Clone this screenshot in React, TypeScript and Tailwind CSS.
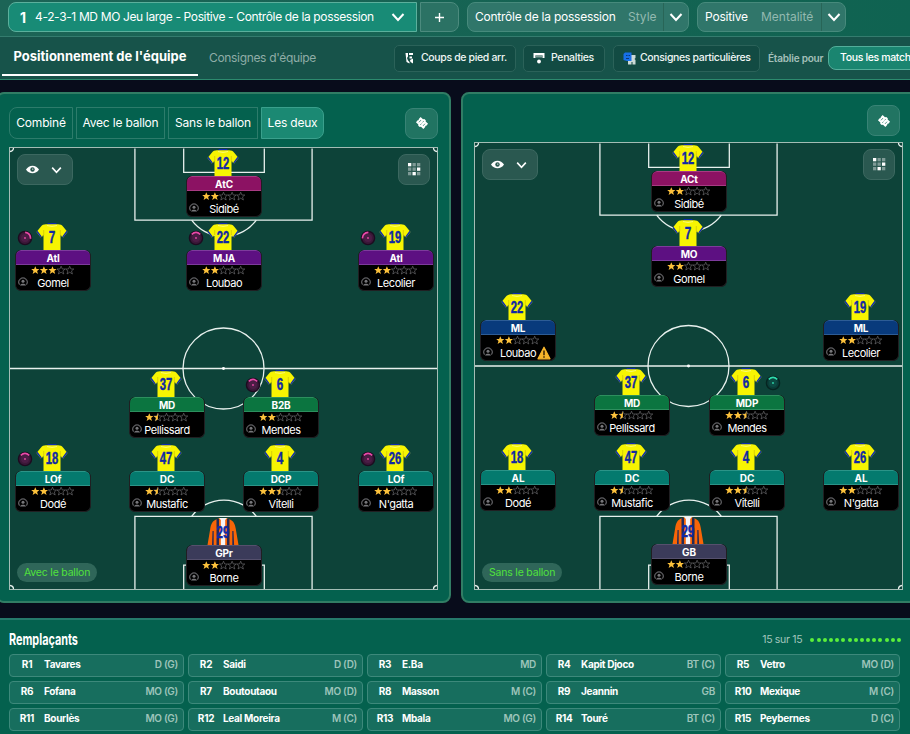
import type { ReactNode } from 'react'
import clsx from 'clsx'

type Tone = 'magenta' | 'purple' | 'blue' | 'green' | 'teal' | 'slate'

interface Player {
  x: number
  y: number
  role: string
  tone: Tone
  shirt: number
  name: string
  stars: number
  /** Rotation of the duty dial, in degrees. */
  dial?: number
  dialSide?: 'left' | 'right'
  warning?: boolean
}

const TONES: Record<Tone, string> = {
  magenta: 'bg-[#8c1263] border-[#a83b83]',
  purple: 'bg-[#5d1082] border-[#7d3b9c]',
  blue: 'bg-[#083a7c] border-[#2d5c96]',
  green: 'bg-[#0b7540] border-[#2d8f5e]',
  teal: 'bg-[#047a6e] border-[#2b9488]',
  slate: 'bg-[#3b3b5a] border-[#55506d]',
}

// x is the middle of the card, y its top edge, both from the pitch corner
const WITH_BALL: Player[] = [
  { x: 214, y: 28, role: 'AtC', tone: 'magenta', shirt: 12, name: 'Sidibé', stars: 2 },
  { x: 43, y: 102, role: 'AtI', tone: 'purple', shirt: 7, name: 'Gomel', stars: 3, dial: 50 },
  { x: 214, y: 102, role: 'MJA', tone: 'purple', shirt: 22, name: 'Loubao', stars: 2, dial: 0 },
  { x: 386, y: 102, role: 'AtI', tone: 'purple', shirt: 19, name: 'Lecolier', stars: 2, dial: -45 },
  { x: 157, y: 249, role: 'MD', tone: 'green', shirt: 37, name: 'Pellissard', stars: 1.5 },
  { x: 271, y: 249, role: 'B2B', tone: 'green', shirt: 6, name: 'Mendes', stars: 2, dial: 0 },
  { x: 43, y: 323, role: 'LOf', tone: 'teal', shirt: 18, name: 'Dodé', stars: 2, dial: 0 },
  { x: 157, y: 323, role: 'DC', tone: 'teal', shirt: 47, name: 'Mustafic', stars: 1.5 },
  { x: 271, y: 323, role: 'DCP', tone: 'teal', shirt: 4, name: 'Vitelli', stars: 2.5 },
  { x: 386, y: 323, role: 'LOf', tone: 'teal', shirt: 26, name: "N'gatta", stars: 2, dial: 0 },
  { x: 214, y: 397, role: 'GPr', tone: 'slate', shirt: 29, name: 'Borne', stars: 2 },
]

const WITHOUT_BALL: Player[] = [
  { x: 214, y: 28, role: 'ACt', tone: 'magenta', shirt: 12, name: 'Sidibé', stars: 2 },
  { x: 214, y: 103, role: 'MO', tone: 'purple', shirt: 7, name: 'Gomel', stars: 2 },
  { x: 43, y: 177, role: 'ML', tone: 'blue', shirt: 22, name: 'Loubao', stars: 2, warning: true },
  { x: 386, y: 177, role: 'ML', tone: 'blue', shirt: 19, name: 'Lecolier', stars: 2 },
  { x: 157, y: 252, role: 'MD', tone: 'green', shirt: 37, name: 'Pellissard', stars: 1.5 },
  { x: 272, y: 252, role: 'MDP', tone: 'green', shirt: 6, name: 'Mendes', stars: 2.5, dial: 0, dialSide: 'right' },
  { x: 43, y: 327, role: 'AL', tone: 'teal', shirt: 18, name: 'Dodé', stars: 2 },
  { x: 157, y: 327, role: 'DC', tone: 'teal', shirt: 47, name: 'Mustafic', stars: 1.5 },
  { x: 272, y: 327, role: 'DC', tone: 'teal', shirt: 4, name: 'Vitelli', stars: 2.5 },
  { x: 386, y: 327, role: 'AL', tone: 'teal', shirt: 26, name: "N'gatta", stars: 2 },
  { x: 214, y: 401, role: 'GB', tone: 'slate', shirt: 29, name: 'Borne', stars: 2 },
]

const SUBS = [
  ['R1', 'Tavares', 'D (G)'],
  ['R2', 'Saidi', 'D (D)'],
  ['R3', 'E.Ba', 'MD'],
  ['R4', 'Kapit Djoco', 'BT (C)'],
  ['R5', 'Vetro', 'MO (D)'],
  ['R6', 'Fofana', 'MO (G)'],
  ['R7', 'Boutoutaou', 'MO (D)'],
  ['R8', 'Masson', 'M (C)'],
  ['R9', 'Jeannin', 'GB'],
  ['R10', 'Mexique', 'M (C)'],
  ['R11', 'Bourlès', 'MO (G)'],
  ['R12', 'Leal Moreira', 'M (C)'],
  ['R13', 'Mbala', 'MO (G)'],
  ['R14', 'Touré', 'BT (C)'],
  ['R15', 'Peybernes', 'D (C)'],
]

function Chevron({ className }: { className?: string }) {
  return (
    <svg className={clsx('shrink-0', className)} viewBox="0 0 14 10" fill="none" stroke="currentColor" strokeWidth="2">
      <path d="m1.5 2 5.5 6 5.5-6" />
    </svg>
  )
}

function Shirt({ number }: { number: number }) {
  const keeper = number === 29
  return (
    <svg className="h-[27px] w-8" viewBox="0 0 32 27">
      {keeper ? (
        <>
          <path d="M9 1.5 13 0h6l4 1.5c3.5 1.5 5 4.5 5.8 9.5l2.7 16H.5l2.7-16C4 6 5.5 3 9 1.5Z" fill="#f86507" />
          <path d="M9.5 1H12v26H9.500zM20 1h2.500v26H20zM5.500 13h1.200v14H5zM25.300 13h1.200l.6 14h-1.800z" fill="#252a55" />
          <path d="M12 0h8l-1.800 2v25h-4.400V2z" fill="#f4f4f8" />
        </>
      ) : (
        <>
          <path d="M12 0h8l1.500 2h-11z" fill="#0c2bb0" />
          <path d="M10 1.300h12c2.400.2 4 .7 5 2.200l4.500 5.500-4.300 5.500-2.700-2.500v15h-17V12l-2.700 2.500L.5 9 5 3.500c1-1.500 2.600-2 5-2.200Z" fill="#f7f402" />
          <path d="m.5 9 1-1.200 4.200 5.700-.9 1zM31.500 9l-1-1.200-4.200 5.700.9 1z" fill="#0c2bb0" />
          <path d="M7.700 7v5l-1.500 1.400M24.300 7v5l1.500 1.400" stroke="#cdbf0a" strokeWidth=".7" fill="none" />
          <path d="M11 2.500q5 2 10 0" stroke="#fbfa8a" strokeWidth=".8" fill="none" />
        </>
      )}
      <text
        x="16"
        y="20"
        textAnchor="middle"
        textLength={number > 9 ? 12.5 : 6.5}
        lengthAdjust="spacingAndGlyphs"
        fontSize="16"
        fontWeight="700"
        fill="#1029a4"
        stroke="#1029a4"
        strokeWidth=".45"
        className="font-['Liberation_Sans',sans-serif]"
      >
        {number}
      </text>
    </svg>
  )
}

const STAR = 'M4.300.2 5.500 3h2.900L6.100 4.900l.9 3.100L4.300 6.200 1.600 8l.9-3.100L.2 3h2.900z'

function Stars({ value }: { value: number }) {
  return (
    <svg className="h-[9px] w-[43px]" viewBox="0 0 43 9">
      {[0, 1, 2, 3, 4].map((i) => (
        <g key={i} transform={`translate(${i * 8.6} 0)`}>
          {value >= i + 1 ? (
            <path d={STAR} fill="#fcc13b" />
          ) : (
            <path d={STAR} fill="none" stroke="#77777a" strokeWidth=".6" />
          )}
          {value === i + 0.5 && <path d="M4.300.2v6L1.600 8l.9-3.100L.2 3h2.900z" fill="#fcc13b" />}
        </g>
      ))}
    </svg>
  )
}

function Dial({ angle, green }: { angle: number; green?: boolean }) {
  return (
    <svg className="h-4 w-4" viewBox="0 0 16 16">
      <circle cx="8" cy="8" r="6.600" fill={green ? '#0a3d38' : '#3b1738'} stroke={green ? '#062521' : '#1c0c20'} strokeWidth="1.400" />
      <circle cx="8" cy="8" r="4" fill={green ? '#0c4b43' : '#4b1d45'} />
      <path
        d="M3.800 4.300Q8 .6 12.200 4.300"
        fill="none"
        stroke={green ? '#2fdcae' : '#e84aa8'}
        strokeWidth="1.700"
        transform={`rotate(${angle} 8 8)`}
      />
      <circle cx="8" cy="8" r=".9" fill={green ? '#2fdcae' : '#e84aa8'} />
    </svg>
  )
}

function PlayerCard({ player: p }: { player: Player }) {
  return (
    <div className="absolute w-[76px]" style={{ left: p.x - 38, top: p.y - 27 }}>
      <div className="flex h-[27px] justify-center pr-[2px]">
        <Shirt number={p.shirt} />
      </div>
      <div className="h-[41px] overflow-hidden rounded-[6px] border border-t-0 border-[#201f22] bg-black text-center text-white">
        <div className={clsx('-mx-px h-[15px] rounded-t-[6px] border text-[10px] leading-[14px] font-bold tracking-[-0.15px]', TONES[p.tone])}>
          {p.role}
        </div>
        <div className="flex h-[11px] items-center justify-center pr-px">
          <Stars value={p.stars} />
        </div>
        <div className="text-[11px] leading-[14px] tracking-[-0.45px]">{p.name}</div>
      </div>
      <svg className="absolute bottom-[4px] left-[3px] h-[10px] w-[10px]" viewBox="0 0 10 10" fill="none">
        <path d="M1.600 7.700A4.200 4.200 0 1 1 8.400 7.700" stroke="#5f5f62" strokeWidth="1.200" />
        <circle cx="5" cy="4.300" r="1.500" fill="#77777a" />
        <path d="M2 8.600C2.400 6 7.600 6 8 8.600z" fill="#77777a" />
      </svg>
      {p.dial !== undefined && (
        <div className={clsx('absolute top-[7px]', p.dialSide === 'right' ? 'left-[56px]' : 'left-[2px]')}>
          <Dial angle={p.dial} green={p.dialSide === 'right'} />
        </div>
      )}
      {p.warning && (
        <svg className="absolute right-[5px] bottom-[1px] h-[14px] w-[14px]" viewBox="0 0 14 14">
          <path d="M7 1.200 13 12.800H1z" fill="#f8b62b" stroke="#f8b62b" strokeWidth="1.200" strokeLinejoin="round" />
          <path d="M7 4.500v4.700M7 10.200v1.600" stroke="#3a2504" strokeWidth="1.500" />
        </svg>
      )}
    </div>
  )
}

function Markings({ height: h }: { height: number }) {
  const mid = h / 2
  return (
    <svg className="absolute inset-0 h-full w-full" viewBox={`0 0 429 ${h}`} fill="none" stroke="#e8f1ee" strokeWidth="1.300">
      <path d={`M125.500.5V72.500h178V.5M174.500.5V24.500h81V.5`} />
      <path d={`M125.500 ${h}V${h - 73}h178V${h}M174.500 ${h}V${h - 24}h81V${h}`} />
      <path d={`M182.500 72.500a40.500 40.500 0 0 0 65 0M182.500 ${h - 73}a40.500 40.500 0 0 1 65 0`} />
      <path d={`M0 ${mid}H429`} strokeWidth="1.700" />
      <circle cx="214.500" cy={mid} r="40.700" />
      <circle cx="214.500" cy={mid} r="1.500" fill="#fff" stroke="none" />
      <path d={`M0 3.500Q3.500 3 3.500 0M429 3.500Q425.500 3 425.500 0M0 ${h - 3.5}Q3.500 ${h - 3} 3.500 ${h}M429 ${h - 3.5}Q425.500 ${h - 3} 425.500 ${h}`} />
    </svg>
  )
}

function Pitch({ players, label, height }: { players: Player[]; label: string; height: number }) {
  return (
    <div className="relative w-[429px] border border-[#a3bdb5] bg-[#0d4339]" style={{ height }}>
      <Markings height={height} />
      <div className="absolute top-[6px] right-[7px] left-[7px] flex justify-between">
        <div className="flex h-[31px] w-14 items-center justify-center gap-[12px] rounded-lg border border-[#3c6860] bg-[#2a5850] pr-[3px] text-white">
          <svg className="h-[9px] w-[13px]" viewBox="0 0 13 9">
            <path d="M0 4.500C3-.6 10-.6 13 4.500 10 9.600 3 9.600 0 4.500Z" fill="#fff" />
            <circle cx="6.500" cy="4.500" r="2.200" fill="#2a5850" />
            <circle cx="6.800" cy="4.100" r=".7" fill="#fff" />
          </svg>
          <Chevron className="h-[8px] w-[11px]" />
        </div>
        <div className="flex h-[31px] w-8 items-center justify-center rounded-lg border border-[#3c6860] bg-[#2a5850]">
          <svg className="h-[13px] w-[13px]" viewBox="0 0 13 13" fill="#fff">
            {[0, 1, 2].map((r) =>
              [0, 1, 2].map((c) => (
                <rect
                  key={`${r}${c}`}
                  x={c * 4.5}
                  y={r * 4.5}
                  width="3.300"
                  height="3.300"
                  opacity={['00', '12', '21'].includes(`${r}${c}`) ? 1 : 0.4}
                />
              )),
            )}
          </svg>
        </div>
      </div>
      {players.map((p) => (
        <PlayerCard key={p.shirt} player={p} />
      ))}
      <div className="absolute bottom-[7px] left-[7px] flex h-[19px] items-center rounded-full bg-[#2f6659] px-[7px] text-[10.5px] tracking-[-0.2px] text-[#51e23c]">
        {label}
      </div>
    </div>
  )
}

function PinButton() {
  return (
    <div className="flex h-[31px] w-[33px] items-center justify-center rounded-lg border border-[#388375] bg-[#217462]">
      <svg className="h-[14px] w-[14px]" viewBox="0 0 14 14">
        <g transform="rotate(42 7 7)">
          <path d="M2 3.500h3.200L6 2.500h2l.8 1H12v3l-.8.5.8.5v3H8.800l-.8 1H6l-.8-1H2v-3l.8-.5-.8-.5z" fill="#fff" />
          <path d="M4.300 5.500v3M9.700 5.500v3M7 4.500v1.700M7 7.800v1.700" stroke="#217462" strokeWidth=".7" />
        </g>
      </svg>
    </div>
  )
}

function ToolButton({ icon, className, children }: { icon: ReactNode; className: string; children: ReactNode }) {
  return (
    <div className={clsx('flex h-[27px] shrink-0 items-center rounded-[5px] border border-[#2b6259] bg-[#124b43] pl-[9px] text-[10.5px] font-medium tracking-[-0.35px] whitespace-nowrap text-[#eef5f3]', className)}>
      {icon}
      {children}
    </div>
  )
}

function Header() {
  return (
    <header className="h-20 border-b border-[#2d8a6e] bg-[#17534a] text-white">
      <div className="flex h-[37px] items-start border-b border-[#347c6e] bg-gradient-to-r from-[#1c6456] to-[#0f6351] pt-[2px] pl-2 text-[12px] whitespace-nowrap">
        <div className="flex h-[30px] w-[409px] items-center rounded-l-lg border border-[#5bb09c] bg-[#188b76] pl-[11px]">
          <span className="w-[15px] shrink-0 text-[14px] font-bold">1</span>
          <span className="tracking-[-0.36px]">4-2-3-1 MD MO Jeu large - Positive - Contrôle de la possession</span>
          <Chevron className="mr-[11px] ml-auto h-[10px] w-[14px]" />
        </div>
        <div className="ml-[3px] flex h-[30px] w-[39px] items-center justify-center rounded-r-lg border border-[#4c8b7e] bg-[#2b7264]">
          <svg className="h-[9px] w-[9px]" viewBox="0 0 9 9" stroke="#fff" strokeWidth="1.400">
            <path d="M4.500 0v9M0 4.500h9" />
          </svg>
        </div>
        <div className="ml-2 flex h-[30px] w-[222px] items-center rounded-lg border border-[#478a7c] bg-[#30766a] pl-[7px]">
          <span className="w-[153px] shrink-0 tracking-[-0.24px]">Contrôle de la possession</span>
          <span className="text-[#93b9b0]">Style</span>
          <span className="ml-auto flex h-full w-[25px] items-center justify-center border-l border-[#286557]">
            <Chevron className="h-[10px] w-[14px]" />
          </span>
        </div>
        <div className="ml-2 flex h-[30px] w-[149px] items-center rounded-lg border border-[#478a7c] bg-[#30766a] pl-[7px]">
          <span className="w-[56px] shrink-0 tracking-[-0.2px]">Positive</span>
          <span className="text-[#93b9b0]">Mentalité</span>
          <span className="ml-auto flex h-full w-[24px] items-center justify-center border-l border-[#286557]">
            <Chevron className="h-[10px] w-[14px]" />
          </span>
        </div>
      </div>
      <div className="flex h-[42px] items-center overflow-hidden pl-[2px] whitespace-nowrap">
        <div className="flex h-[39px] w-[196px] shrink-0 items-center justify-center self-start border-b-2 border-white pt-[2px] text-[13px] font-bold">
          Positionnement de l'équipe
        </div>
        <div className="w-[196px] shrink-0 pl-[11px] text-[12px] tracking-[-0.33px] text-[#8fada7]">Consignes d'équipe</div>
        <ToolButton
          className="w-[122px]"
          icon={
            <svg className="mr-[6px] h-3 w-[11px] shrink-0" viewBox="0 0 11 12" fill="#fff">
              <path d="M1.500 1H4v3.500L3 6l1 2.500L5.500 10v1.500L2.500 10zM5 1h4v2H5zM5.500 4.500h2.500v2H5.500zM6 8l3-1.500v5L6.500 10z" />
            </svg>
          }
        >
          Coups de pied arr.
        </ToolButton>
        <ToolButton
          className="ml-[7px] w-[82px]"
          icon={
            <svg className="mr-[6px] h-3 w-3 shrink-0" viewBox="0 0 12 12">
              <path d="M.5 6V1h11v5h-2V3.500h-7V6z" fill="#fff" />
              <path d="M2.500 3.200h7V5.500h-7z" fill="#7f9e98" />
              <circle cx="6" cy="9.500" r="1.900" fill="#fff" />
            </svg>
          }
        >
          Penalties
        </ToolButton>
        <ToolButton
          className="ml-2 w-[147px]"
          icon={
            <svg className="mr-[4px] h-[13px] w-[13px] shrink-0" viewBox="0 0 13 13">
              <path d="M8 3h4.500v3l-1 1 1 1v4.500h-3V10h-1v2.500H5V9h3z" fill="#cbdad7" />
              <path d="M.5 2 2 .5h6.500V9H4L.5 8z" fill="#1770e8" />
              <path d="M3 3.500h1.500M5.500 3.500H7M3 6.500h3" stroke="#0b3976" />
            </svg>
          }
        >
          Consignes particulières
        </ToolButton>
        <span className="ml-[8px] w-[60px] shrink-0 text-[10px] font-semibold tracking-[-0.2px] text-[#a4c0ba]">Établie pour</span>
        <div className="flex h-6 w-[110px] shrink-0 items-center rounded-lg border border-[#53ae9a] bg-[#1a8570] pl-[11px] text-[10.5px] font-medium tracking-[-0.35px]">
          Tous les match
        </div>
      </div>
    </header>
  )
}

const TAB = 'flex h-8 items-center justify-center border text-[12px] tracking-[-0.2px] whitespace-nowrap text-white'

export default function App() {
  return (
    <div className="h-[734px] w-[910px] overflow-hidden bg-[#080c1b] font-['Inter',sans-serif]">
      <Header />

      <div className="mt-[12px] flex h-[511px] gap-[10px]">
        <section className="-ml-1 w-[455px] shrink-0 rounded-lg border-2 border-[#317d64] bg-[#04614e] pl-[11px]">
          <div className="flex h-[53px] items-center gap-[3px] pt-[5px] pr-[11px]">
            <div className={clsx(TAB, 'w-[64px] rounded-l-lg border-[#2d7c6b]')}>Combiné</div>
            <div className={clsx(TAB, 'w-[89px] border-[#2d7c6b]')}>Avec le ballon</div>
            <div className={clsx(TAB, 'w-[90px] border-[#2d7c6b]')}>Sans le ballon</div>
            <div className={clsx(TAB, 'w-[63px] rounded-r-lg border-[#3aa08c] bg-[#1b8973]')}>Les deux</div>
            <div className="ml-auto">
              <PinButton />
            </div>
          </div>
          <Pitch players={WITH_BALL} label="Avec le ballon" height={443} />
        </section>
        <section className="w-[460px] shrink-0 rounded-lg border-2 border-[#317d64] bg-[#04614e] pl-[11px]">
          <div className="flex h-[48px] items-center justify-end pt-[5px] pr-[19px]">
            <PinButton />
          </div>
          <Pitch players={WITHOUT_BALL} label="Sans le ballon" height={448} />
        </section>
      </div>

      <section className="mt-[15px] h-[120px] border-t-2 border-[#25796b] bg-[#04614e] px-[9px] pt-[9px]">
        <div className="flex h-[25px] items-center justify-between pb-[4px]">
          <h2 className="origin-left scale-x-[0.7] text-[15.5px] font-bold text-white">Remplaçants</h2>
          <div className="flex items-center gap-[8px] text-[10.5px] text-[#a3c6bd]">
            <span className="tracking-[-0.3px]">15 sur 15</span>
            <div className="flex gap-[2.2px]">
              {SUBS.map(([slot]) => (
                <span key={slot} className="size-[4px] rounded-full bg-[#5cf03a]" />
              ))}
            </div>
          </div>
        </div>
        <div className="grid w-[891px] grid-cols-5 gap-x-[4px] gap-y-[4px]">
          {SUBS.map(([slot, name, pos]) => (
            <div key={slot} className="flex h-[23px] items-center rounded-[4px] border border-[#3d897b] bg-[#176e5e] pr-[5px] pb-[2px] text-[10px] font-bold tracking-[-0.3px] text-white">
              <span className="w-[34px] text-center">{slot}</span>
              <span>{name}</span>
              <span className="ml-auto font-semibold text-[#9dc4ba]">{pos}</span>
            </div>
          ))}
        </div>
      </section>
    </div>
  )
}
